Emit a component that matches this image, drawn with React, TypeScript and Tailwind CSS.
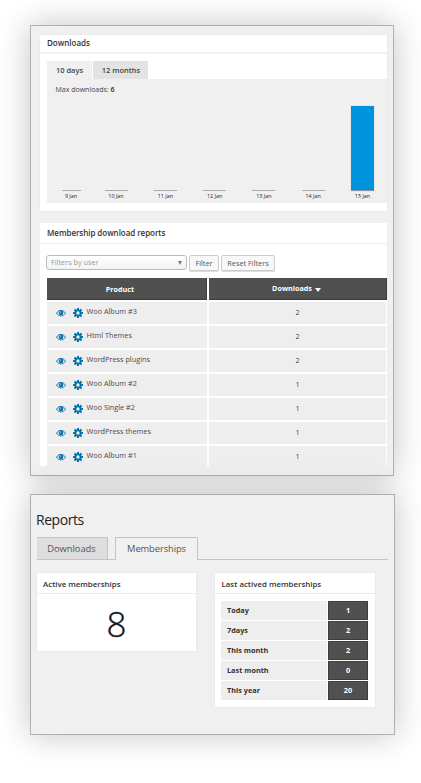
import React from "react";

const days = ["9 Jan", "10 Jan", "11 Jan", "12 Jan", "13 Jan", "14 Jan", "15 Jan"];

const products: [string, number][] = [
  ["Woo Album #3", 2],
  ["Html Themes", 2],
  ["WordPress plugins", 2],
  ["Woo Album #2", 1],
  ["Woo Single #2", 1],
  ["WordPress themes", 1],
  ["Woo Album #1", 1],
];

const periods: [string, number][] = [
  ["Today", 1],
  ["7days", 2],
  ["This month", 2],
  ["Last month", 0],
  ["This year", 20],
];

function EyeIcon() {
  return (
    <svg className="mt-[2px] block h-[8px] w-[10px] shrink-0" viewBox="0 0 20 16">
      <path d="M1 8.5C5 1 15 1 19 8.5C15 15.5 5 15.5 1 8.5Z" fill="#e9f1f5" stroke="#1478ab" strokeWidth="2" />
      <circle cx="10" cy="7.6" r="4.8" fill="#0073aa" />
      <circle cx="8.6" cy="5.8" r="1.5" fill="#d5e8f1" />
    </svg>
  );
}

function GearIcon() {
  return (
    <svg className="mt-[1px] block h-[10px] w-[10px] shrink-0" viewBox="0 0 20 20">
      <g fill="#0073aa">
        {[0, 45, 90, 135].map((angle) => (
          <rect key={angle} x="8" y="0" width="4" height="20" rx="0.6" transform={`rotate(${angle} 10 10)`} />
        ))}
        <circle cx="10" cy="10" r="6.9" />
      </g>
      <circle cx="10" cy="10" r="3.3" fill="#eeeeee" />
    </svg>
  );
}

function DownloadsChart() {
  return (
    <div className="flex h-[124px] items-start bg-[#f0f0f0]">
      <div className="flex w-full flex-col">
        <div className="h-[27px] pl-[8.5px] pt-[5px] text-[7px] leading-[12px] text-[#444]">
          Max downloads: <b className="font-semibold text-[#222]">6</b>
        </div>
        <div className="flex pl-[14.5px]">
          {days.map((day, i) => (
            <div
              key={day}
              className={
                i === 0
                  ? "mr-[24px] flex w-[19px] flex-col items-center"
                  : "mr-[26.3px] flex w-[23px] shrink-0 flex-col items-center last:mr-0"
              }
            >
              <div
                className={
                  i === 6
                    ? "h-[85px] w-full border-b border-[#8296a3] bg-[#0093dd] shadow-[0_0_0_1px_#e7e7e7]"
                    : "h-[85px] w-full border-b border-[#aaa]"
                }
              />
              <span className="mt-[1px] whitespace-nowrap text-[5.4px] leading-[8px] text-[#222]">{day}</span>
            </div>
          ))}
        </div>
      </div>
    </div>
  );
}

function DownloadsPanel() {
  return (
    <section className="relative h-[451px] w-[364px] border border-[#b0b0b0] bg-[#f0f0f0] pl-[9px] pt-[9px] shadow-[0_0_30px_rgba(0,0,0,0.24)]">
      <div className="h-[176px] w-[347px] bg-white shadow-[0_0_1px_#ddd]">
        <h2 className="h-[19px] border-b-2 border-[#f1f1f1] pl-[7px] text-[8px] font-semibold leading-[16px] text-[#333]">Downloads</h2>
        <div className="pl-[7px] pt-[7px]">
          <div className="flex h-[18px] gap-[1px] text-[7.5px] font-semibold leading-[18px] text-[#444]">
            <div className="w-[45px] bg-[#f0f0f0] text-center">10 days</div>
            <div className="w-[55px] bg-[#e3e3e3] pl-[1px] text-center">12 months</div>
          </div>
          <DownloadsChart />
        </div>
      </div>
      <div className="mt-[12px] h-[243px] w-[347px] overflow-hidden bg-white">
        <h2 className="h-[21px] border-b border-[#eee] pl-[7px] text-[8px] font-semibold leading-[20px] tracking-[-0.05px] text-[#333]">
          Membership download reports
        </h2>
        <div className="flex items-start gap-[2px] pl-[6px] pt-[11px] text-[7.3px] text-[#555]">
          <div className="flex h-[15px] w-[141px] items-center justify-between rounded-[3px] border border-[#bbb] bg-gradient-to-b from-white to-[#f3f3f3] pl-[4px] pr-[4px] leading-[13px] text-[#999]">
            <span>Filters by user</span>
            <span className="h-0 w-0 border-x-[2px] border-t-[4px] border-x-transparent border-t-[#777]" />
          </div>
          <button className="h-[16px] w-[30px] rounded-[2px] border border-[#ccc] bg-[#f8f8f8] text-center leading-[14px] shadow-[0_1px_0_#ddd]">
            Filter
          </button>
          <button className="h-[16px] w-[54px] whitespace-nowrap rounded-[2px] border border-[#ccc] bg-[#f8f8f8] text-center leading-[14px] shadow-[0_1px_0_#ddd]">
            Reset Filters
          </button>
        </div>
        <div className="ml-[7px] mt-[7px] flex flex-col gap-[2px]">
          <div className="flex h-[22px] gap-[2px] text-[7.2px] font-bold leading-[22px] text-white">
            <div className="w-[160px] border-b border-r border-[#3c3c3c] bg-[#505050] pr-[13px] text-center">Product</div>
            <div className="flex w-[178px] items-start justify-center gap-[3px] border-b border-r border-[#3c3c3c] bg-[#505050] pr-[2px]">
              <span className="leading-[20px]">Downloads</span>
              <span className="mt-[10px] h-0 w-0 border-x-[3px] border-t-[4px] border-x-transparent border-t-white" />
            </div>
          </div>
          {products.map(([name, count]) => (
            <div key={name} className="flex h-[22px] gap-[2px] text-[7.3px] text-[#4a4a4a]">
              <div className="flex w-[160px] items-start bg-[#eee] pl-[9px] pt-[5px]">
                <EyeIcon />
                <span className="w-[7px]" />
                <GearIcon />
                <span className="ml-[3.5px] mt-[-2px] leading-[12px]">{name}</span>
              </div>
              <div className="w-[177px] bg-[#eee] text-center leading-[21px]">{count}</div>
            </div>
          ))}
        </div>
      </div>
    </section>
  );
}

function ReportsPanel() {
  return (
    <section className="relative mt-[18px] h-[241px] w-[365px] border border-[#b0b0b0] bg-[#f0f0f0] pl-[6px] pt-[14px] shadow-[0_0_30px_rgba(0,0,0,0.24)]">
      <h1 className="ml-[-1px] h-[28px] text-[14px] leading-[21px] tracking-[-0.45px] text-[#222]">Reports</h1>
      <div className="flex h-[23px] w-[351px] items-stretch text-[9.4px] leading-[22px] text-[#555]">
        <div className="w-[71px] border border-l-0 border-[#c4c4c4] bg-[#dedede] pr-[1px] text-center tracking-[-0.05px]">Downloads</div>
        <div className="w-[7px] border-b border-[#c4c4c4]" />
        <div className="w-[83px] border border-b-0 border-[#c4c4c4] bg-[#f1f1f1] text-center tracking-[-0.1px]">Memberships</div>
        <div className="flex-1 border-b border-[#c4c4c4]" />
      </div>
      <div className="mt-[13px] flex items-start gap-[19px]">
        <div className="h-[78px] w-[159px] bg-white shadow-[0_0_0_1px_#ebebeb]">
          <h2 className="h-[21px] border-b border-[#eaeaea] pl-[6px] text-[7.9px] font-semibold leading-[22px] text-[#333]">
            Active memberships
          </h2>
          <div className="text-center text-[35px] font-light leading-[59px] text-[#111] [-webkit-text-stroke:0.4px_#222]">8</div>
        </div>
        <div className="h-[134px] w-[160px] bg-white shadow-[0_0_0_1px_#ebebeb]">
          <h2 className="h-[21px] border-b border-[#eaeaea] pl-[6.5px] text-[7.9px] font-semibold leading-[22px] text-[#333]">
            Last actived memberships
          </h2>
          <div className="flex flex-col gap-[1px] pl-[6px] pt-[7px] text-[7.3px] font-bold leading-[18px]">
            {periods.map(([label, count]) => (
              <div key={label} className="flex h-[19px] gap-[1px]">
                <div className="w-[106px] bg-[#eee] pl-[6px] text-[#333]">{label}</div>
                <div className="w-[40px] border border-[#3c3c3c] bg-[#505050] text-center leading-[17px] text-white">{count}</div>
              </div>
            ))}
          </div>
        </div>
      </div>
    </section>
  );
}

export default function App() {
  return (
    <main className="h-[783px] w-[421px] overflow-hidden bg-white pl-[30px] pt-[25px] font-['Open_Sans','Noto_Sans',sans-serif]">
      <DownloadsPanel />
      <ReportsPanel />
    </main>
  );
}
